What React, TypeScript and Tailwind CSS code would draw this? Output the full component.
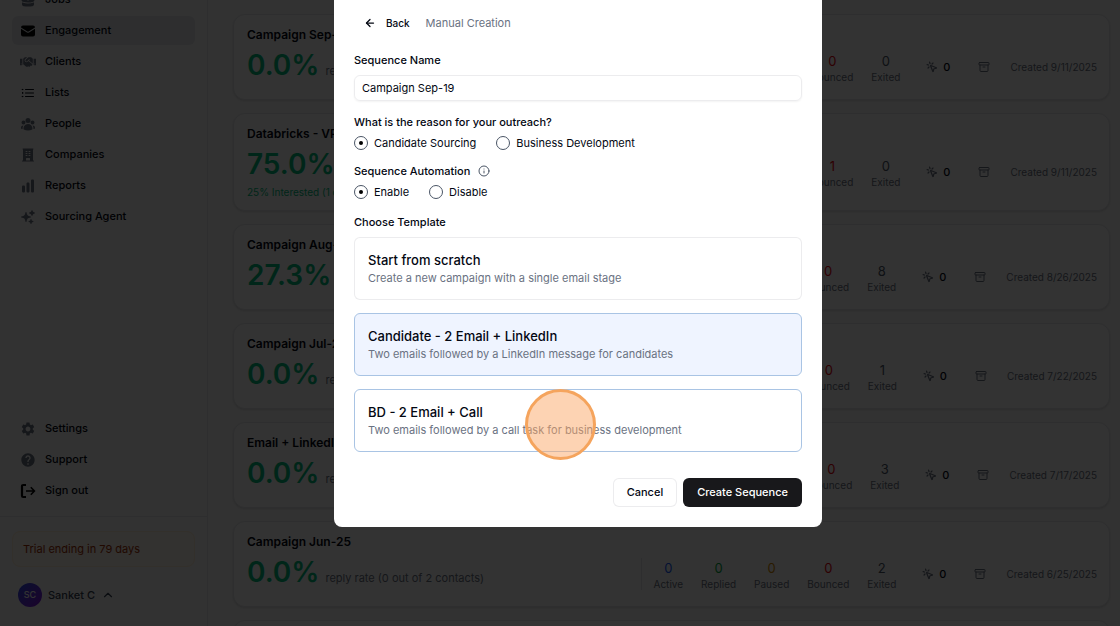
import React, { useState } from 'react';
import { Archive, ArrowLeft, ChevronUp, Info, MousePointerClick } from 'lucide-react';
import { FaHandshake } from 'react-icons/fa';
import {
  HiBriefcase,
  HiBuildingOffice,
  HiChartBar,
  HiEnvelope,
  HiOutlineListBullet,
  HiSparkles,
  HiUserGroup,
} from 'react-icons/hi2';
import { MdHelp, MdSettings } from 'react-icons/md';

const SignOutIcon: React.FC<{ className?: string }> = ({ className }) => (
  <svg viewBox="0 0 16 16" fill="none" stroke="currentColor" className={className}>
    <path d="M6 2H3.2C2.5 2 2 2.5 2 3.2v9.6c0 .7.5 1.2 1.2 1.2H6" strokeWidth="2.2" />
    <path d="M6 8h8M10.8 4.3 14.4 8l-3.6 3.7" strokeWidth="1.6" />
  </svg>
);

const mainLinks = [
  { label: 'Jobs', icon: HiBriefcase, color: 'text-gray-500' },
  { label: 'Engagement', icon: HiEnvelope, color: 'text-black', active: true },
  { label: 'Clients', icon: FaHandshake, color: 'text-gray-500' },
  { label: 'Lists', icon: HiOutlineListBullet, color: 'text-gray-950' },
  { label: 'People', icon: HiUserGroup, color: 'text-gray-500' },
  { label: 'Companies', icon: HiBuildingOffice, color: 'text-gray-500' },
  { label: 'Reports', icon: HiChartBar, color: 'text-gray-500' },
  { label: 'Sourcing Agent', icon: HiSparkles, color: 'text-gray-500' },
];

const footerLinks = [
  { label: 'Settings', icon: MdSettings, color: 'text-gray-500' },
  { label: 'Support', icon: MdHelp, color: 'text-gray-500' },
  { label: 'Sign out', icon: SignOutIcon, color: 'text-black' },
];

const campaigns = [
  { title: 'Campaign Sep-11', rate: '0.0%', detail: 'reply rate (0 out of 0 contacts)', bounced: 0, exited: 0, date: '9/11/2025' },
  { title: 'Databricks - VP', rate: '75.0%', detail: 'reply rate (3 out of 4 contacts)', note: '25% Interested (1 out of 4)', bounced: 1, exited: 0, date: '9/11/2025' },
  { title: 'Campaign Aug-26', rate: '27.3%', detail: 'reply rate (3 out of 11 contacts)', bounced: 0, exited: 8, date: '8/26/2025' },
  { title: 'Campaign Jul-22', rate: '0.0%', detail: 'reply rate (0 out of 1 contacts)', bounced: 0, exited: 1, date: '7/22/2025' },
  { title: 'Email + LinkedIn', rate: '0.0%', detail: 'reply rate (0 out of 3 contacts)', bounced: 0, exited: 3, date: '7/17/2025' },
  { title: 'Campaign Jun-25', rate: '0.0%', detail: 'reply rate (0 out of 2 contacts)', bounced: 0, exited: 2, date: '6/25/2025' },
  { title: 'Campaign Jun-20', rate: '0.0%', detail: 'reply rate (0 out of 2 contacts)', bounced: 0, exited: 2, date: '6/20/2025' },
];

const templates = [
  { title: 'Start from scratch', description: 'Create a new campaign with a single email stage' },
  { title: 'Candidate - 2 Email + LinkedIn', description: 'Two emails followed by a LinkedIn message for candidates' },
  { title: 'BD - 2 Email + Call', description: 'Two emails followed by a call task for business development' },
];

type NavLink = {
  label: string;
  icon: React.ComponentType<{ className?: string }>;
  color: string;
  active?: boolean;
};

const NavItem: React.FC<{ link: NavLink }> = ({ link }) => {
  const Icon = link.icon;
  return (
    <a
      href="#"
      className={`flex h-[29px] shrink-0 items-center gap-[9px] rounded-md px-2 text-[11px] font-medium text-gray-950 ${link.active ? 'bg-gray-200' : ''}`}
    >
      <Icon className={`size-4 ${link.color}`} />
      {link.label}
    </a>
  );
};

const Sidebar: React.FC = () => (
  <aside className="flex h-full w-52 shrink-0 flex-col overflow-hidden border-r border-gray-200 bg-neutral-50">
    <nav className="-mt-[15px] flex flex-col gap-0.5 px-3">
      {mainLinks.map((link) => (
        <NavItem key={link.label} link={link} />
      ))}
    </nav>
    <nav className="mt-auto flex flex-col gap-0.5 border-b border-gray-200 px-3 pb-[11px]">
      {footerLinks.map((link) => (
        <NavItem key={link.label} link={link} />
      ))}
    </nav>
    <div className="px-3 pt-3.5 pb-[19px]">
      <div className="rounded-lg border border-orange-100 bg-orange-50 px-2.5 py-2 text-[11px] leading-[18px] text-orange-800">
        Trial ending in 79 days
      </div>
      <button className="mt-4 flex items-center gap-1.5 px-1.5 text-[11px] font-medium text-gray-700">
        <span className="flex size-6 items-center justify-center rounded-full bg-linear-to-br from-blue-700 to-purple-700 text-[9px] text-white">
          SC
        </span>
        Sanket C
        <ChevronUp className="size-3.5" />
      </button>
    </div>
  </aside>
);

const Stat: React.FC<{ value: number; label: string; color: string }> = ({ value, label, color }) => (
  <div className="text-center">
    <div className={`text-[13px] leading-4 ${color}`}>{value}</div>
    <div className="text-[10px] leading-4 text-gray-500">{label}</div>
  </div>
);

const CampaignCard: React.FC<{ campaign: (typeof campaigns)[number] }> = ({ campaign }) => (
  <article className="shrink-0 rounded-xl border border-gray-200 bg-white pt-[11px] pr-3 pb-[9px] pl-[13px] shadow-sm">
    <h2 className="text-xs leading-[18px] font-semibold text-gray-950">{campaign.title}</h2>
    <div className="flex min-h-[46px] items-center justify-between">
      <div className="self-start pt-px">
        <div className="flex h-10 items-baseline gap-1.5 leading-10">
          <span className="text-[28px] font-semibold text-emerald-500">{campaign.rate}</span>
          <span className="text-[11px] text-gray-500">{campaign.detail}</span>
        </div>
        {campaign.note && <p className="text-[10px] leading-[17px] text-emerald-500">{campaign.note}</p>}
      </div>
      <div className="flex items-center">
        <div className="mr-3 h-8 w-px bg-gray-200" />
        <div className="flex gap-[18px] pt-1">
          <Stat value={0} label="Active" color="text-blue-600" />
          <Stat value={0} label="Replied" color="text-green-600" />
          <Stat value={0} label="Paused" color="text-yellow-600" />
          <Stat value={campaign.bounced} label="Bounced" color="text-red-600" />
          <Stat value={campaign.exited} label="Exited" color="text-gray-600" />
        </div>
        <div className="ml-[26px] flex items-center gap-[5px] text-[11px] font-medium text-gray-950">
          <MousePointerClick className="size-3 text-gray-500" strokeWidth={2.5} />
          {0}
        </div>
        <button aria-label="Archive" className="mr-4 ml-6 px-1 text-gray-500">
          <Archive className="size-3" />
        </button>
        <span className="text-[10px] text-gray-500">Created {campaign.date}</span>
      </div>
    </div>
  </article>
);

const RadioRow: React.FC<{ name: string; options: string[] }> = ({ name, options }) => (
  <div className="mt-px flex items-center gap-5">
    {options.map((option, index) => (
      <label key={option} className="flex items-center gap-1.5 text-[11px] leading-5 text-gray-950">
        <input
          type="radio"
          name={name}
          defaultChecked={index === 0}
          className="flex size-3.5 appearance-none items-center justify-center rounded-full border border-gray-600 before:size-1 before:rounded-full checked:before:bg-black"
        />
        {option}
      </label>
    ))}
  </div>
);

const SequenceDialog: React.FC = () => {
  const [selected, setSelected] = useState(1);

  return (
    <div role="dialog" aria-label="Manual Creation" className="w-full max-w-[488px] rounded-b-lg bg-white px-5 pb-5">
      <div className="flex h-[46px] items-center gap-4 pl-2.5">
        <button className="flex items-center gap-2.5 text-[10px] font-medium text-gray-950">
          <ArrowLeft className="size-3" strokeWidth={2.5} />
          Back
        </button>
        <span className="text-[11px] text-gray-500">Manual Creation</span>
      </div>

      <label htmlFor="sequence-name" className="mt-1 block text-[11px] leading-5 font-medium text-gray-950">
        Sequence Name
      </label>
      <input
        id="sequence-name"
        defaultValue="Campaign Sep-19"
        className="mt-[5px] block h-[26px] w-full rounded-md border border-zinc-200/70 px-[7px] text-[11px] text-gray-950 shadow-xs"
      />

      <p className="mt-[11px] text-[11px] leading-5 font-medium text-gray-950">What is the reason for your outreach?</p>
      <RadioRow name="reason" options={['Candidate Sourcing', 'Business Development']} />

      <p className="mt-2 flex items-center gap-2 text-[11px] leading-5 font-medium text-gray-950">
        Sequence Automation
        <Info className="size-3 text-gray-600" />
      </p>
      <RadioRow name="automation" options={['Enable', 'Disable']} />

      <p className="mt-2.5 text-[11px] leading-5 font-medium text-gray-950">Choose Template</p>
      <div className="mt-[5px] flex flex-col gap-[13px]">
        {templates.map((template, index) => (
          <button
            key={template.title}
            aria-pressed={selected === index}
            onClick={() => setSelected(index)}
            className={`relative rounded-md border px-[13px] pt-[13px] pb-3 text-left ${
              index === 0 ? 'border-zinc-200/70' : 'border-[#a9c4e4]'
            } ${selected === index ? 'bg-[#eff4ff]' : 'bg-white'}`}
          >
            <span className="block text-[13px] leading-[18px] font-medium text-gray-950">{template.title}</span>
            <span className="block text-[11px] leading-[18px] text-gray-500">{template.description}</span>
            {index === 2 && (
              <span className="absolute -top-px left-[170px] size-[71px] rounded-full border-[3px] border-[#f5a45d] bg-[#fba868]/50" />
            )}
          </button>
        ))}
      </div>

      <div className="mt-[26px] flex justify-end gap-1.5">
        <button className="h-[29px] rounded-md border border-zinc-200/70 bg-white px-[13px] text-[11px] font-medium text-gray-950">
          Cancel
        </button>
        <button className="h-[29px] rounded-md bg-zinc-900 px-3.5 text-[11px] font-medium text-white">
          Create Sequence
        </button>
      </div>
    </div>
  );
};

const App: React.FC = () => {
  return (
    <div className="relative h-screen overflow-hidden bg-neutral-50 font-[Inter,sans-serif]">
      <div className="flex h-full">
        <Sidebar />
        <main className="flex min-w-0 flex-1 flex-col gap-[13px] overflow-hidden pt-3.5 pr-2.5 pl-[25px]">
          {campaigns.map((campaign, index) => (
            <CampaignCard key={index} campaign={campaign} />
          ))}
        </main>
      </div>
      <div className="absolute inset-0 flex items-start justify-center bg-black/80 pl-9">
        <SequenceDialog />
      </div>
    </div>
  );
};

export default App;
